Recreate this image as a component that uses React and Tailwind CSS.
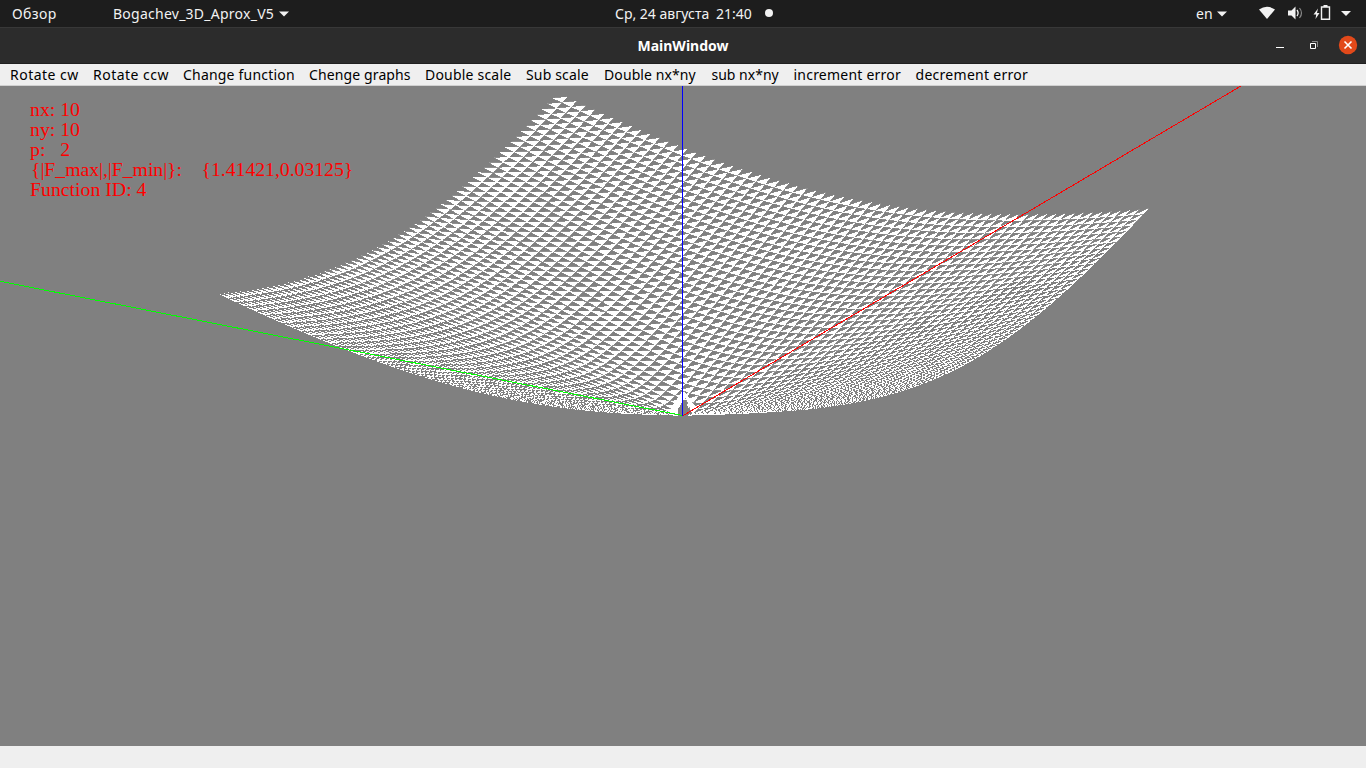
const N = 64;
const ORIGIN = [683, 329.8];
const X_UNIT = [170.3, -100.5];
const Y_UNIT = [-295.2, -58];
const Z_UNIT = 116.5;
const CENTER_Z = 0.22;

function project(x, y) {
  const z = x === 0 && y === 0 ? CENTER_Z : Math.hypot(x, y);
  return [
    ORIGIN[0] + x * X_UNIT[0] + y * Y_UNIT[0],
    ORIGIN[1] + x * X_UNIT[1] + y * Y_UNIT[1] - z * Z_UNIT,
  ];
}

function trianglePath(points) {
  return "M" + points.map((p) => p[0].toFixed(2) + " " + p[1].toFixed(2)).join("L") + "Z";
}

// One triangle per grid cell, wound the same way so overlaps stay filled.
// Cells facing the viewer edge-on are kept apart: outlining them would close their gaps.
function buildSurface() {
  const h = 2 / N;
  const open = [];
  const steep = [];
  for (let i = 0; i < N; i++) {
    for (let j = 0; j < N; j++) {
      const x = -1 + i * h;
      const y = -1 + j * h;
      const a = project(x, y);
      let b = project(x + h, y);
      let c = project(x, y + h);
      const area = (b[0] - a[0]) * (c[1] - a[1]) - (b[1] - a[1]) * (c[0] - a[0]);
      if (area < 0) [b, c] = [c, b];
      (Math.abs(area) > 45 ? open : steep).push(trianglePath([a, b, c]));
    }
  }
  return { open: open.join(""), steep: steep.join("") };
}

const SURFACE = buildSurface();
// The dark half-cell in front of the raised centre node.
const FRONT_CELL = "M678 330V323L680 320L683 314H686L688 322L691 324L688 330Z";

const MENU = [
  ["Rotate cw", "w-[83px] tracking-[0.48px]"],
  ["Rotate ccw", "w-[90px] tracking-[0.48px]"],
  ["Change function", "w-[126px] tracking-[0.2px]"],
  ["Chenge graphs", "w-[116px] tracking-[0.12px]"],
  ["Double scale", "w-[101px] tracking-[0.2px]"],
  ["Sub scale", "w-[78px] tracking-[0.15px]"],
  ["Double nx*ny", "w-[107.500px] tracking-[0.1px]"],
  ["sub nx*ny", "w-[82px]"],
  ["increment error", "w-[122px] tracking-[0.22px]"],
  ["decrement error", "w-[122px] tracking-[0.28px]"],
];

function Caret() {
  return (
    <svg width="10" height="6" viewBox="0 0 10 6" className="shrink-0">
      <path d="M0 0.5H10L5 5.5Z" fill="#f2f2f2" />
    </svg>
  );
}

function TopBar() {
  return (
    <header className="grid h-[27px] shrink-0 grid-cols-[615px_1fr_170px] bg-[#1d1d1d] text-[14px] leading-[27px] text-[#f2f2f2]">
      <div className="flex items-center">
        <span className="w-[101px] pl-3 tracking-[0.4px]">Обзор</span>
        <span className="w-[166px] pl-3 tracking-[0.25px]">Bogachev_3D_Aprox_V5</span>
        <span className="flex pl-3"><Caret /></span>
      </div>
      <div className="flex items-center">
        <span className="w-[101px]">Ср, 24 августа</span>
        <span className="w-[49px]">21:40</span>
        <span className="mb-px h-2 w-2 rounded-full bg-[#f2f2f2]" />
      </div>
      <div className="flex items-center">
        <span className="w-[21px]">en</span>
        <Caret />
        <svg width="100" height="27" viewBox="0 0 100 27" className="ml-[30px] shrink-0" fill="none">
          <path d="M2 9.500Q10 4 18 9.500L10 19Z" fill="#f2f2f2" />
          <path d="M31 10.500h3.500l4-4v13l-4-4h-3.500Z" fill="#f2f2f2" />
          <path d="M40 10q2.200 3 0 6" stroke="#f2f2f2" strokeWidth="1.3" />
          <path d="M42.500 8q4 5 0 10" stroke="#888" strokeWidth="1.2" />
          <path d="M61 8.500l-4.500 6h2.700l-.7 4.500 4-6h-2.500Z" fill="#f2f2f2" />
          <path d="M64.500 7v12.300h8v-12.300Z" stroke="#f2f2f2" strokeWidth="1.400" />
          <path d="M66.500 5h4v2h-4Z" fill="#f2f2f2" />
          <path d="M84 11H94L89 16Z" fill="#f2f2f2" />
        </svg>
      </div>
    </header>
  );
}

function TitleBar() {
  return (
    <div className="grid h-[37px] shrink-0 grid-cols-[1fr_auto_1fr] items-center border-t border-b border-t-[#383838] border-b-[#202020] bg-[#2c2c2c] text-[14px] font-bold text-white">
      <span />
      <span>MainWindow</span>
      <svg width="90" height="35" viewBox="1276 28 90 35" className="justify-self-end" fill="none">
        <path d="M1276 47h8v1h-8Z" fill="#fff" />
        <path d="M1310.500 43.500h5v5h-5Z" stroke="#fff" />
        <path d="M1312 41.500h5.500v5.500" stroke="#888" />
        <circle cx="1348" cy="45" r="9.200" fill="#e2491a" />
        <path d="M1344.500 41.500l7 7M1351.500 41.500l-7 7" stroke="#fff" strokeWidth="1.600" />
      </svg>
    </div>
  );
}

export default function App() {
  return (
    <div className="flex h-[768px] w-[1366px] flex-col overflow-hidden whitespace-nowrap bg-[#efefef] font-['Noto_Sans','Open_Sans',sans-serif]">
      <TopBar />
      <TitleBar />
      <nav className="flex h-[22px] shrink-0 border-b border-[#d0d0d0] bg-[#efefef] pl-[10px] text-[14px] leading-[22px] text-black">
        {MENU.map(([label, width]) => (
          <span key={label} className={width + " shrink-0"}>{label}</span>
        ))}
      </nav>
      <main className="grid h-[660px] shrink-0 bg-[#808080]">
        <svg width="1366" height="660" viewBox="0 0 1366 660" shapeRendering="crispEdges" className="col-start-1 row-start-1" fill="none">
          <path d={SURFACE.steep} fill="#fff" />
          <path d={SURFACE.open} fill="#fff" stroke="#fff" strokeWidth="0.12" />
          <path d={FRONT_CELL} fill="#808080" />
          <path d="M683 329.600L1241 0" stroke="#f00" />
          <path d="M683 329.600L0 195.300" stroke="#0f0" />
          <path d="M682.500 0V330" stroke="#00f" />
        </svg>
        <div className="col-start-1 row-start-1 whitespace-pre pl-[30px] pt-[13px] font-['Liberation_Serif',serif] text-[19.8px] leading-5 text-[#f00]">
          <p>nx: 10</p>
          <p>ny: 10</p>
          <p>p:   2</p>
          <p className="pl-px tracking-[-0.05px]">{"{|F_max|,|F_min|}:    {1.41421,0.03125}"}</p>
          <p>Function ID: 4</p>
        </div>
      </main>
    </div>
  );
}
